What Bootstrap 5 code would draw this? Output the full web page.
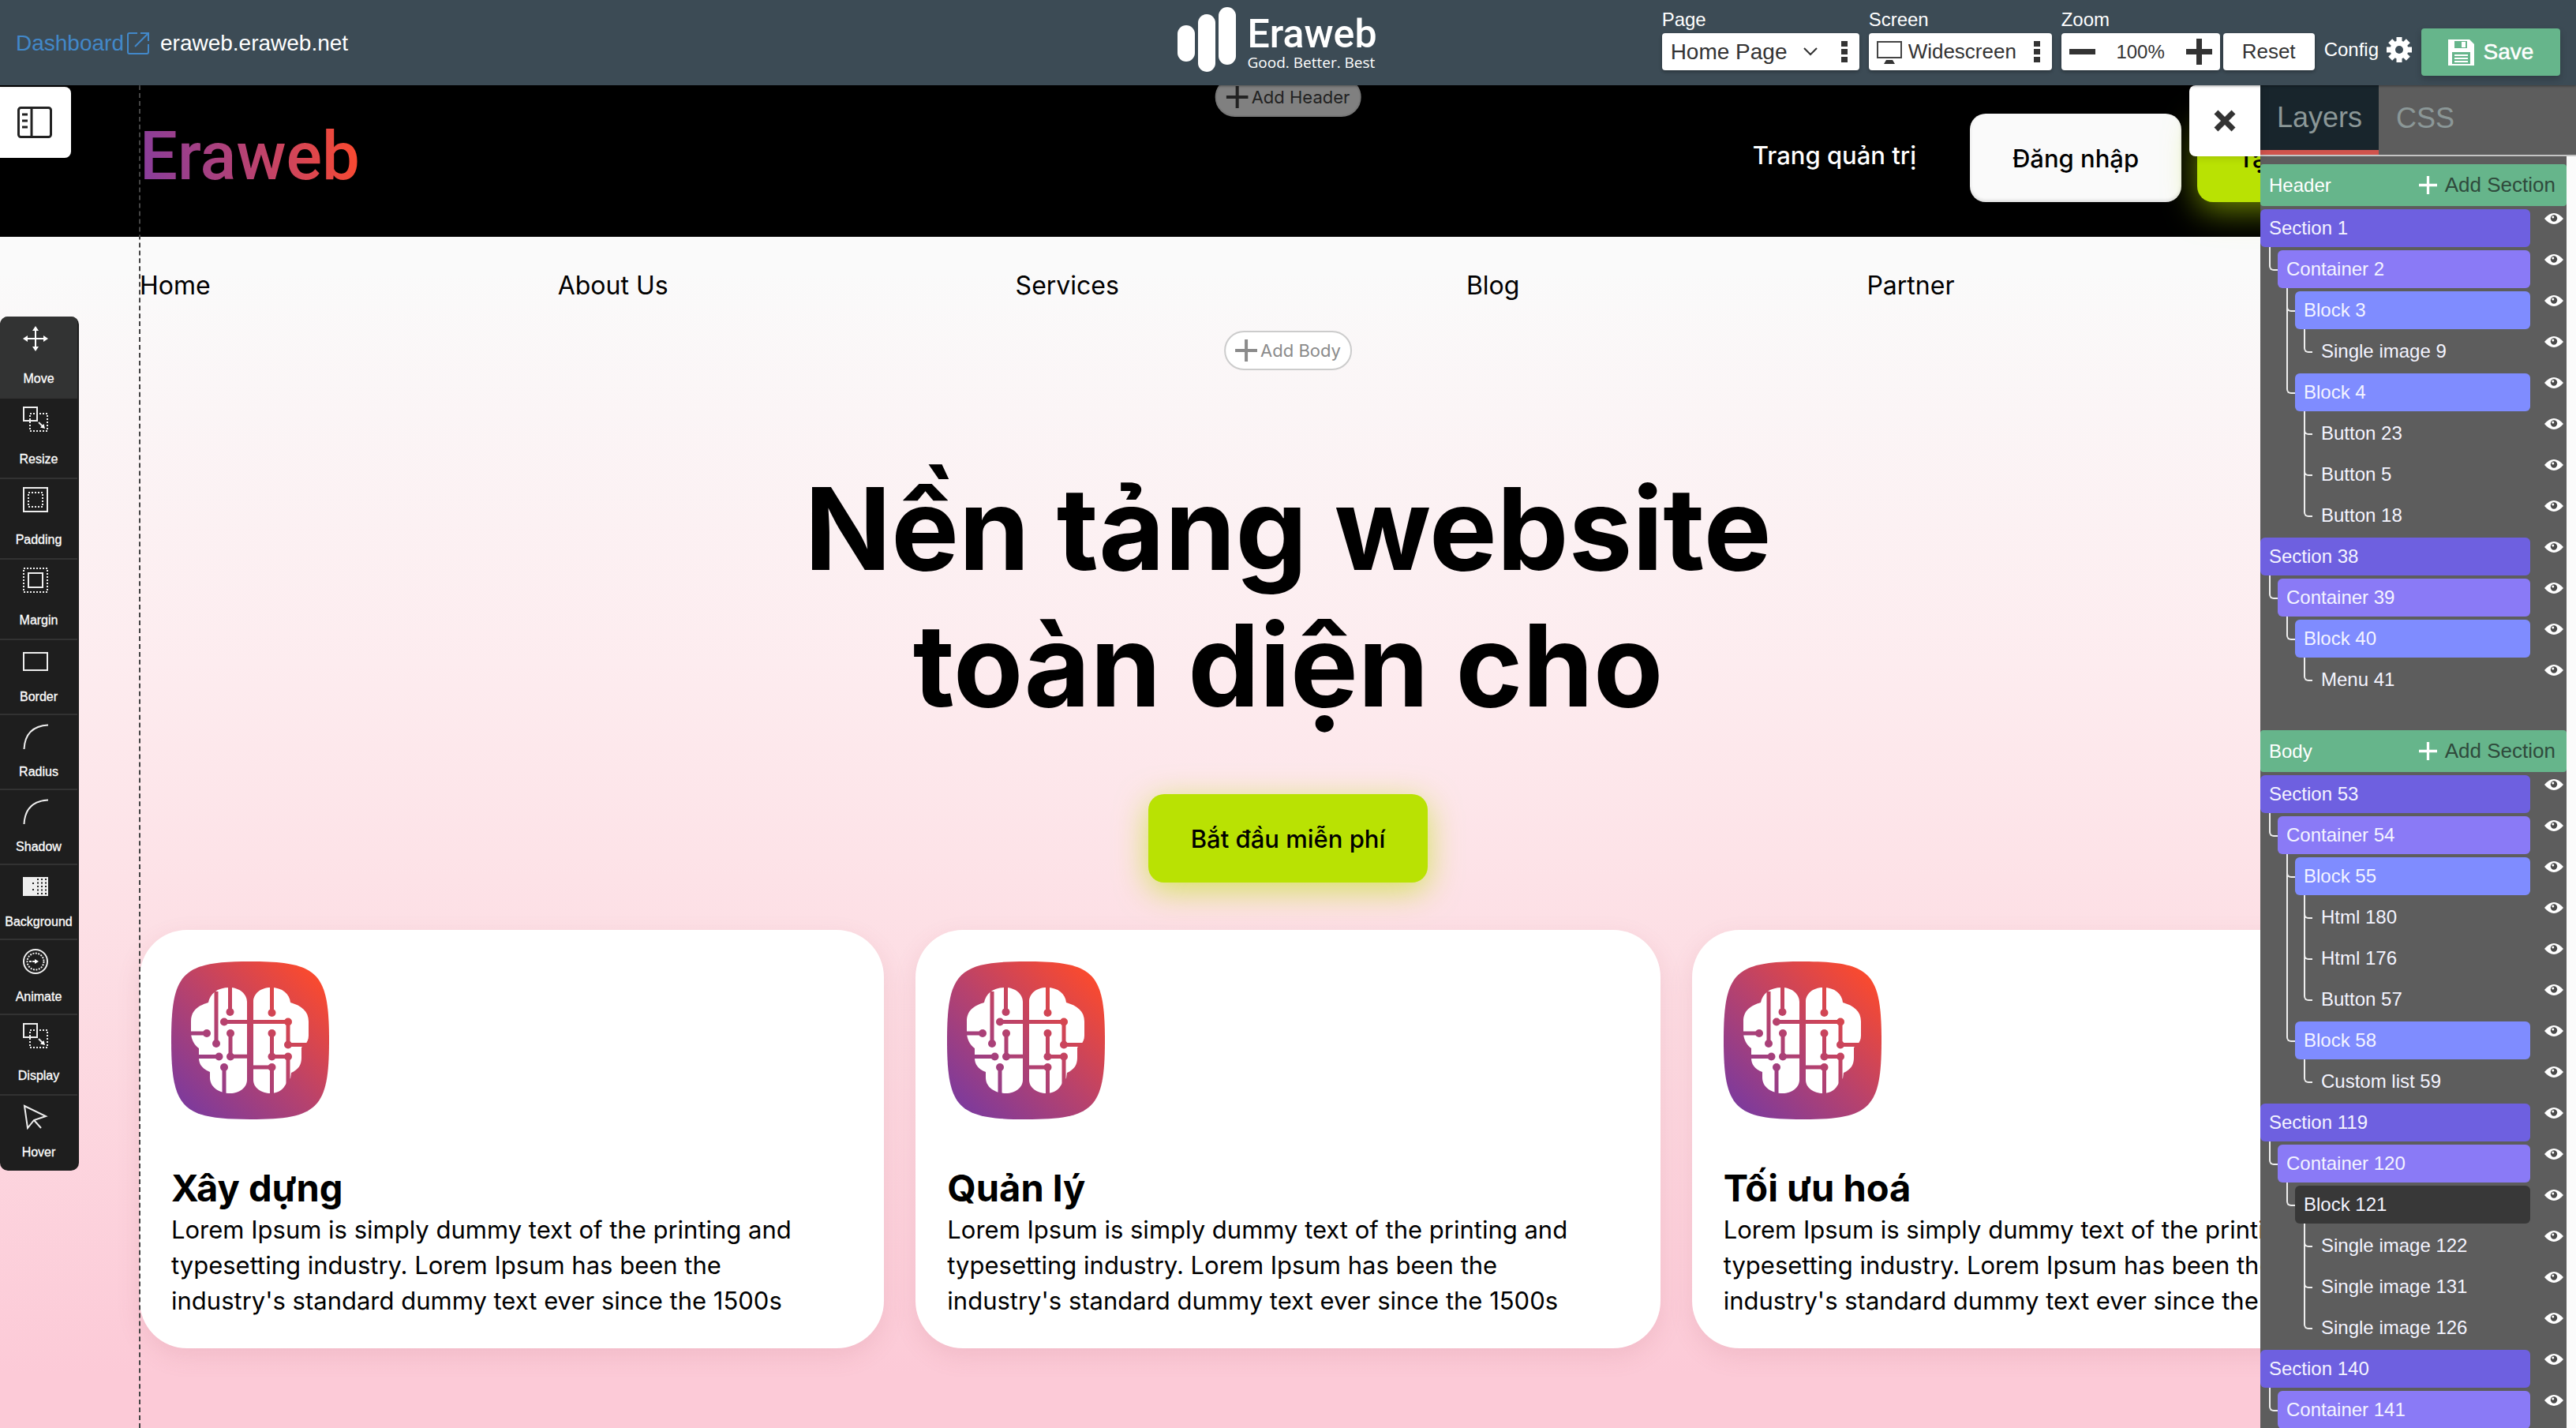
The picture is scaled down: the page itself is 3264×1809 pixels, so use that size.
<!DOCTYPE html>
<html lang="vi">
<head>
<meta charset="utf-8">
<meta name="viewport" content="width=device-width, initial-scale=1">
<title>Eraweb builder</title>
<link href="https://cdn.jsdelivr.net/npm/bootstrap@5.3.0/dist/css/bootstrap.min.css" rel="stylesheet">
<style>
  body{font-family:"Liberation Sans",Arial,sans-serif;color:#000}
  svg{display:block;flex:none}
  button{font:inherit}
  /* top bar */
  .topbar{display:grid;grid-template-columns:1fr auto 1fr;height:108px;background:#3c4b55;padding:0 20px;color:#fff;box-shadow:0 1px 3px #0006;z-index:5}
  .crumbs{font-size:28px;gap:14px;padding-top:2px}
  .crumbs a{color:#4288c9;gap:4px}
  .brand{padding:9px 28px 0 0;gap:14px}
  .brand-word{font:500 50px/52px Roboto,sans-serif}
  .brand-tag{font:400 19px/20px "Open Sans",sans-serif}
  .tools{gap:12px;padding-top:8px}
  .tool-label{font-size:24px;line-height:34px;height:34px;display:block}
  .ctl{height:47px;background:#fff;border-radius:4px;color:#333;box-shadow:0 2px 4px #0005}
  .ctl select{appearance:none;border:0;background:none;padding:0;color:#333;outline:0}
  .ctl button,.bare{border:0;background:none;padding:0;color:inherit}
  .pagebox{width:250px;padding:0 14px 0 11px;font-size:28px}
  .screenbox{width:232px;padding:0 14px 0 10px;font-size:26px}
  .zoombox{width:201px;padding:0 10px;font-size:24px}
  .resetbtn{width:116px;border:0;font-size:26px;margin:34px 0 0 4px}
  .cfg{font-size:24px;gap:10px;height:54px;margin-top:28px}
  .savebtn{width:176px;height:60px;margin-top:28px;border:0;border-radius:4px;background:#66b58b;color:#fff;font-size:28px;gap:12px;box-shadow:0 4px 8px #0003;-webkit-text-stroke:.5px #fff}
  /* site canvas: full window width, the layers panel lies over its right edge */
  .viewport{margin-right:400px;overflow:hidden}
  .canvas{width:100vw;font-family:Inter,sans-serif;font-size:32px;line-height:45px;background:linear-gradient(#fafafa 14%,#fdecef 43%,#fde2e7 59%,#fccad7 96%)}
  .wrap{max-width:2910px;margin:0 auto}
  .site-head{background:#000;height:192px}
  .site-head .wrap{gap:20px;padding-top:36px}
  .site-logo{font:500 85px/108px Roboto,sans-serif;background:linear-gradient(80deg,#863d9e,#b84272 50%,#ff4a2b);-webkit-background-clip:text;background-clip:text;color:transparent}
  .site-link{color:#fff;font-weight:500;font-size:31px;line-height:106px;margin-right:48px}
  .cta{border:0;border-radius:20px;height:112px;font-weight:500;color:#000;font-size:31px}
  .cta-plain{width:268px;background:#fafafa;box-shadow:inset 0 -2px 4px #0002}
  .cta-lime{background:#b9e203;box-shadow:0 10px 40px #b9e20399}
  .cta-wide{width:303px;padding:0 52px}
  .cta-hero{width:354px;margin-top:77px}
  .site-menu{height:144px;padding-top:39px;gap:440px}
  .site-menu a{color:#000}
  .hero{padding-top:139px}
  .hero h1{font-size:144px;line-height:173px;font-weight:700;margin:0}
  .features{gap:40px;padding-top:60px}
  .feature{flex:1 1 0;background:#fff;border-radius:60px;padding:40px 40px 38px;box-shadow:0 10px 30px #b0506022}
  .feature h2{font-size:47px;line-height:60px;font-weight:700;margin:57px 0 0}
  .feature p{margin:0;font-size:31px;max-width:820px}
  .guide{position:absolute;left:176px;top:0;bottom:0;border-left:2px dashed #444}
  .addpill{position:absolute;left:50%;transform:translateX(-50%);height:50px;border-radius:25px;border:2px solid #ccc;background:#fff;color:#8b8b8b;font:400 22px/24px Inter,sans-serif;padding:0 12px;gap:4px}
  .addpill-head{top:-10px;background:#808080;border-color:#777;color:#222}
  .addpill-body{top:311px}
  /* floating controls */
  .side-toggle{position:absolute;left:0;top:2px;width:90px;height:90px;padding-left:22px;border:0;background:#fff;border-radius:0 8px 8px 0}
  .side-close{position:absolute;right:400px;top:0;width:90px;height:90px;border:0;background:#fff;border-radius:8px 0 0 8px;z-index:1;box-shadow:0 0 12px #0003}
  .toolbox{position:absolute;left:0;top:293px;width:100px;background:#1e1e1e;border-radius:10px;overflow:hidden;color:#fff}
  .toolbox button{border:0;border-bottom:2px solid #323232;background:none;color:#fff;width:98px;font-size:16px;line-height:20px;height:95px;padding:11px 0 0;gap:19px}
  .toolbox button svg{margin-right:8px}
  .toolbox .tall{height:102px;padding-top:10px;gap:25px}
  .toolbox .tall.on{background:#323333;height:104px;padding-top:12px}
  .toolbox button:last-child{border-bottom:0}
  .toolbox span{-webkit-text-stroke:.3px #fff}
  /* layers panel */
  .layers{position:absolute;right:0;top:0;bottom:0;width:400px;background:#5d5d5d;overflow:hidden}
  .tabs{height:90px;border-bottom:2px solid #c4c4c4}
  .tabs button{border:0;background:none;color:#8b9797;font-size:36px;padding:0 22px 4px}
  .tabs .on{background:#18252c;border-bottom:6px solid #d0534c;width:150px;padding:0}
  .layers-body{padding:10px 0 0;border-right:12px solid #fbfbfb}
  .group{height:53px;background:#66b58b;border-radius:4px;color:#fff;padding:0 14px 0 11px;font-size:24px;margin-bottom:4px}
  .group button{color:#2f4a3c;font-size:26px;gap:10px}
  .tree,.tree ul{list-style:none;margin:0;padding:0}
  .tree{margin-bottom:36px}
  .tree ul{margin-left:22px}
  .tree li{position:relative}
  .tree li li::before{content:"";position:absolute;left:-11px;top:-4px;width:11px;height:30px;border:solid #eee;border-width:0 0 2px 2px;border-radius:0 0 0 6px}
  .tree li li:not(:last-child)::after{content:"";position:absolute;left:-11px;top:-4px;bottom:0;border-left:2px solid #eee}
  .node{height:52px;padding-right:4px;gap:18px}
  .node a{flex:1;height:48px;line-height:48px;padding-left:11px;border-radius:6px;font-size:24px;color:#f4f4ff;text-decoration:none}
  .node button{padding-top:5px}
  .sec{background:#6e60e0}.con{background:#8a7af6}.blk{background:#7f8cff}.sel{background:#383838}
</style>
<script src="https://cdn.jsdelivr.net/npm/bootstrap@5.3.0/dist/js/bootstrap.bundle.min.js"></script>
</head>
<body class="vh-100 d-flex flex-column overflow-hidden">
<svg width="0" height="0" class="position-absolute" aria-hidden="true">
  <defs>
    <linearGradient id="gr" gradientUnits="userSpaceOnUse" x1="20" y1="190" x2="180" y2="20"><stop stop-color="#7c3a9d"/><stop offset=".5" stop-color="#b8426c"/><stop offset="1" stop-color="#f84a30"/></linearGradient>
    <symbol id="eye" viewBox="0 0 24 14"><path d="M0 7Q6 0 12 0t12 7q-6 7-12 7T0 7Z" fill="#fff"/><circle cx="12" cy="6.500" r="4.200" fill="#4a4a4a"/><circle cx="10.800" cy="5" r="1.500" fill="#fff"/></symbol>
    <symbol id="dots" viewBox="0 0 10 30"><path d="M1 1h8v7H1zM1 11h8v7H1zM1 21h8v7H1z" fill="#333"/></symbol>
    <symbol id="plus" viewBox="0 0 28 28"><path d="M14 0v28M0 14h28" stroke="currentColor" stroke-width="4"/></symbol>
    <symbol id="resize" viewBox="0 0 32 32"><g fill="none" stroke="#eee" stroke-width="2"><path d="M1 1h17v17H1z"/><path d="M9 9h22v22H9z" stroke-dasharray="2 2"/><path d="m20 20 5 5"/></g><path d="m28 28-6-1.500 4.500-4.500z" fill="#fff"/></symbol>
    <symbol id="arc" viewBox="0 0 32 32"><path d="M1.500 32Q3 3 32 1.500" fill="none" stroke="#eee" stroke-width="2"/></symbol>
    <symbol id="brain" viewBox="0 0 200 200">
      <path d="M0 100C0 14 14 0 100 0S200 14 200 100 186 200 100 200 0 186 0 100Z" fill="url(#gr)"/>
      <g fill="#fff"><path d="M96 51v99c0 10-10 17-21 17-15 0-26-8-26-20v-7c-10-4-14-10-14-18v-12c-6-4-10-12-10-20V76c0-14 9-20 22-24 2-11 11-19 27-19 12 0 22 8 22 18Z"/>
      <path d="M104 51c0-10 9-18 22-18 15 0 24 8 25 19 14 4 23 11 23 24v18c0 5-2 8-4 11l-5 4v13c0 9-4 15-13 19l-1 7-5 3v3c-4 8-10 13-20 13-12 0-22-7-22-17Z"/></g>
      <g fill="none" stroke="url(#gr)" stroke-width="5"><path d="M74.500 32v32M57 38v66M66 76.500h82v29h28M127.500 32v33M24 91h21M75 91v29.200h22M34 120.500h27M67 134v34M127.500 91v29.500H148V158M103 134h24.500v34"/></g>
      <g fill="url(#gr)"><circle cx="74.500" cy="64" r="5"/><circle cx="57" cy="104" r="5"/><circle cx="67" cy="76.500" r="5"/><circle cx="148" cy="76.500" r="5"/><circle cx="148" cy="105.500" r="5"/><circle cx="127.500" cy="65" r="5"/><circle cx="45" cy="91" r="5"/><circle cx="75" cy="91" r="5"/><circle cx="75" cy="120.500" r="5"/><circle cx="60.500" cy="120.500" r="5"/><circle cx="67" cy="134" r="5"/><circle cx="127.500" cy="91" r="5"/><circle cx="127.500" cy="120.500" r="5"/><circle cx="148" cy="120.500" r="5"/><circle cx="127.500" cy="134" r="5"/></g>
    </symbol>
  </defs>
</svg>

<header class="topbar position-relative">
  <div class="crumbs d-flex align-items-center">
    <a href="#" class="d-flex align-items-center text-decoration-none">Dashboard
      <svg width="28" height="28" viewBox="0 0 28 28" fill="none" stroke="#4288c9" stroke-width="2"><path d="M13 1H3a2 2 0 0 0-2 2v22a2 2 0 0 0 2 2h22a2 2 0 0 0 2-2V15M17 1h10v10M27 1 10 18"/></svg></a>
    <span>eraweb.eraweb.net</span>
  </div>
  <div class="brand d-flex">
    <svg width="75" height="82" viewBox="0 0 75 82" fill="#fff"><rect y="23" width="22" height="46" rx="11"/><rect x="26" y="9" width="22" height="73" rx="11"/><rect x="52" width="22" height="73" rx="11"/></svg>
    <div class="pt-2"><div class="brand-word">Eraweb</div><div class="brand-tag">Good. Better. Best</div></div>
  </div>
  <div class="tools d-flex justify-content-end align-items-start">
    <div><label class="tool-label" for="page">Page</label>
      <div class="ctl pagebox d-flex align-items-center justify-content-between"><select id="page"><option>Home Page</option></select>
        <svg width="18" height="12" viewBox="0 0 18 12" fill="none" stroke="#333" stroke-width="2"><path d="m1 1 8 8 8-8"/></svg>
        <button class="ms-2" aria-label="Page menu"><svg width="10" height="30"><use href="#dots"/></svg></button></div></div>
    <div><label class="tool-label" for="screen">Screen</label>
      <div class="ctl screenbox d-flex align-items-center"><svg width="32" height="30" viewBox="0 0 32 30"><path d="M1 2h30v20H1z" fill="none" stroke="#444" stroke-width="2"/><path d="M12 25h8l3 5H9z" fill="#333"/></svg>
        <select id="screen" class="ms-2"><option>Widescreen</option></select>
        <button class="ms-auto" aria-label="Screen menu"><svg width="10" height="30"><use href="#dots"/></svg></button></div></div>
    <div class="d-flex">
      <div><label class="tool-label" for="zoomout">Zoom</label>
        <div class="ctl zoombox d-flex align-items-center justify-content-between"><button id="zoomout" aria-label="Zoom out"><svg width="33" height="8" viewBox="0 0 33 8"><path d="M0 0h33v7H0z" fill="#333"/></svg></button><span>100%</span><button aria-label="Zoom in"><svg width="33" height="33" viewBox="0 0 33 33"><path d="M16.500 0v33M0 16.500h33" stroke="#333" stroke-width="7"/></svg></button></div></div>
      <button class="ctl resetbtn">Reset</button>
    </div>
    <button class="bare cfg d-flex align-items-center"><span>Config</span>
      <svg width="32" height="32" viewBox="0 0 32 32"><g stroke="#fff" stroke-width="7"><path d="M16 0v32M0 16h32M4.700 4.700l22.600 22.600M27.300 4.700 4.700 27.300"/></g><circle cx="16" cy="16" r="11.500" fill="#fff"/><circle cx="16" cy="16" r="5" fill="#3c4b55"/></svg></button>
    <button class="savebtn d-flex align-items-center justify-content-center"><svg width="33" height="33" viewBox="0 0 33 33"><path d="M0 0h27l6 6v27H0z" fill="#fff"/><path d="M8 2h16v9H8zM5 16h23v15H5z" fill="#66b58b"/><path d="M17 3h5v7h-5zM8 19h17v2H8zM8 23h17v2H8zM8 27h17v2H8z" fill="#fff"/></svg>Save</button>
  </div>
</header>

<main class="position-relative flex-fill overflow-hidden">
  <div class="viewport h-100">
  <div class="canvas h-100">
    <div class="site-head"><div class="wrap d-flex">
      <div class="site-logo me-auto">Eraweb</div>
      <a href="#" class="site-link text-decoration-none">Trang quản trị</a>
      <button class="cta cta-plain">Đăng nhập</button>
      <button class="cta cta-lime cta-wide text-start">Tạo</button>
    </div></div>
    <nav class="wrap site-menu d-flex text-nowrap">
      <a href="#" class="text-decoration-none">Home</a><a href="#" class="text-decoration-none">About Us</a><a href="#" class="text-decoration-none">Services</a><a href="#" class="text-decoration-none">Blog</a><a href="#" class="text-decoration-none">Partner</a>
    </nav>
    <section class="hero text-center">
      <h1>Nền tảng website<br>toàn diện cho</h1>
      <button class="cta cta-lime cta-hero">Bắt đầu miễn phí</button>
    </section>
    <section class="wrap features d-flex">
      <article class="feature"><svg width="200" height="200"><use href="#brain"/></svg><h2>Xây dựng</h2><p>Lorem Ipsum is simply dummy text of the printing and typesetting industry. Lorem Ipsum has been the industry's standard dummy text ever since the 1500s</p></article>
      <article class="feature"><svg width="200" height="200"><use href="#brain"/></svg><h2>Quản lý</h2><p>Lorem Ipsum is simply dummy text of the printing and typesetting industry. Lorem Ipsum has been the industry's standard dummy text ever since the 1500s</p></article>
      <article class="feature"><svg width="200" height="200"><use href="#brain"/></svg><h2>Tối ưu hoá</h2><p>Lorem Ipsum is simply dummy text of the printing and typesetting industry. Lorem Ipsum has been the industry's standard dummy text ever since the 1500s</p></article>
    </section>
  </div>
  </div>
  <div class="guide"></div>
  <button class="addpill addpill-head d-flex align-items-center"><svg width="28" height="28"><use href="#plus"/></svg>Add Header</button>
  <button class="addpill addpill-body d-flex align-items-center"><svg width="28" height="28"><use href="#plus"/></svg>Add Body</button>

  <button class="side-toggle" aria-label="Toggle sidebar"><svg width="44" height="40" viewBox="0 0 44 40" fill="none" stroke="#222" stroke-width="3"><rect x="1.500" y="1.500" width="41" height="37" rx="3"/><path d="M18 1v38M6 10h7M6 18h7M6 26h7"/></svg></button>

  <div class="toolbox">
    <button class="tall on d-flex flex-column align-items-center"><svg width="32" height="32" viewBox="0 0 32 32"><path d="M16 4v24M4 16h24" stroke="#fff" stroke-width="2"/><path d="m16 0 4 6h-8zM16 32l4-6h-8zM0 16l6-4v8zM32 16l-6-4v8z" fill="#fff"/></svg><span>Move</span></button>
    <button class="tall d-flex flex-column align-items-center"><svg width="32" height="32"><use href="#resize"/></svg><span>Resize</span></button>
    <button class="tall d-flex flex-column align-items-center"><svg width="32" height="32" viewBox="0 0 32 32" fill="none" stroke="#eee" stroke-width="2"><path d="M1 1h30v30H1z"/><path d="M7 7h18v18H7z" stroke-dasharray="2 2"/></svg><span>Padding</span></button>
    <button class="tall d-flex flex-column align-items-center"><svg width="32" height="32" viewBox="0 0 32 32" fill="none" stroke="#eee" stroke-width="2"><path d="M1 1h30v30H1z" stroke-dasharray="2 2"/><path d="M7 7h18v18H7z"/></svg><span>Margin</span></button>
    <button class="d-flex flex-column align-items-center"><svg width="32" height="32" viewBox="0 0 32 32" fill="none" stroke="#eee" stroke-width="2"><path d="M1 5h30v22H1z"/></svg><span>Border</span></button>
    <button class="d-flex flex-column align-items-center"><svg width="32" height="32"><use href="#arc"/></svg><span>Radius</span></button>
    <button class="d-flex flex-column align-items-center"><svg width="32" height="32"><use href="#arc"/></svg><span>Shadow</span></button>
    <button class="d-flex flex-column align-items-center"><svg width="32" height="32" viewBox="0 0 32 32"><path d="M0 4h32v24H0z" fill="#eee"/><path d="M29 6v22M24 6v22M19 6v22" stroke="#222" stroke-width="2" stroke-dasharray="2 2.500"/><path d="M13 11v12" stroke="#222" stroke-width="2" stroke-dasharray="2 6"/></svg><span>Background</span></button>
    <button class="d-flex flex-column align-items-center"><svg width="32" height="32" viewBox="0 0 32 32" fill="none" stroke="#eee" stroke-width="2"><circle cx="16" cy="16" r="15"/><circle cx="16" cy="16" r="10.500" stroke-dasharray="2 1.500"/><path d="M8 16h10" stroke-dasharray="3 1"/><path d="m15 13 5 3-5 3z" fill="#fff" stroke="none"/></svg><span>Animate</span></button>
    <button class="tall d-flex flex-column align-items-center"><svg width="32" height="32"><use href="#resize"/></svg><span>Display</span></button>
    <button class="d-flex flex-column align-items-center"><svg width="32" height="32" viewBox="0 0 32 32" fill="none" stroke="#eee" stroke-width="2"><path d="m2 2 27 13-15 5-8 10zM14 20l9 10"/></svg><span>Hover</span></button>
  </div>

  <button class="side-close d-flex align-items-center justify-content-center" aria-label="Close panel"><svg width="28" height="28" viewBox="0 0 28 28"><path d="m3 3 22 22M25 3 3 25" stroke="#333" stroke-width="7"/></svg></button>
  <aside class="layers">
    <div class="tabs d-flex"><button class="on">Layers</button><button>CSS</button></div>
    <div class="layers-body h-100">
      <div class="group d-flex align-items-center justify-content-between">Header<button class="bare d-flex align-items-center"><svg width="23" height="23" viewBox="0 0 28 28" color="#fff"><use href="#plus"/></svg>Add Section</button></div>
      <ul class="tree">
        <li><div class="node d-flex align-items-start"><a href="#" class="sec">Section 1</a><button class="bare" aria-label="Toggle"><svg width="24" height="14"><use href="#eye"/></svg></button></div>
          <ul><li><div class="node d-flex align-items-start"><a href="#" class="con">Container 2</a><button class="bare" aria-label="Toggle"><svg width="24" height="14"><use href="#eye"/></svg></button></div>
            <ul><li><div class="node d-flex align-items-start"><a href="#" class="blk">Block 3</a><button class="bare" aria-label="Toggle"><svg width="24" height="14"><use href="#eye"/></svg></button></div>
                <ul><li><div class="node d-flex align-items-start"><a href="#">Single image 9</a><button class="bare" aria-label="Toggle"><svg width="24" height="14"><use href="#eye"/></svg></button></div></li></ul></li>
              <li><div class="node d-flex align-items-start"><a href="#" class="blk">Block 4</a><button class="bare" aria-label="Toggle"><svg width="24" height="14"><use href="#eye"/></svg></button></div>
                <ul><li><div class="node d-flex align-items-start"><a href="#">Button 23</a><button class="bare" aria-label="Toggle"><svg width="24" height="14"><use href="#eye"/></svg></button></div></li>
                  <li><div class="node d-flex align-items-start"><a href="#">Button 5</a><button class="bare" aria-label="Toggle"><svg width="24" height="14"><use href="#eye"/></svg></button></div></li>
                  <li><div class="node d-flex align-items-start"><a href="#">Button 18</a><button class="bare" aria-label="Toggle"><svg width="24" height="14"><use href="#eye"/></svg></button></div></li></ul></li></ul></li></ul></li>
        <li><div class="node d-flex align-items-start"><a href="#" class="sec">Section 38</a><button class="bare" aria-label="Toggle"><svg width="24" height="14"><use href="#eye"/></svg></button></div>
          <ul><li><div class="node d-flex align-items-start"><a href="#" class="con">Container 39</a><button class="bare" aria-label="Toggle"><svg width="24" height="14"><use href="#eye"/></svg></button></div>
            <ul><li><div class="node d-flex align-items-start"><a href="#" class="blk">Block 40</a><button class="bare" aria-label="Toggle"><svg width="24" height="14"><use href="#eye"/></svg></button></div>
                <ul><li><div class="node d-flex align-items-start"><a href="#">Menu 41</a><button class="bare" aria-label="Toggle"><svg width="24" height="14"><use href="#eye"/></svg></button></div></li></ul></li></ul></li></ul></li>
      </ul>
      <div class="group d-flex align-items-center justify-content-between">Body<button class="bare d-flex align-items-center"><svg width="23" height="23" viewBox="0 0 28 28" color="#fff"><use href="#plus"/></svg>Add Section</button></div>
      <ul class="tree">
        <li><div class="node d-flex align-items-start"><a href="#" class="sec">Section 53</a><button class="bare" aria-label="Toggle"><svg width="24" height="14"><use href="#eye"/></svg></button></div>
          <ul><li><div class="node d-flex align-items-start"><a href="#" class="con">Container 54</a><button class="bare" aria-label="Toggle"><svg width="24" height="14"><use href="#eye"/></svg></button></div>
            <ul><li><div class="node d-flex align-items-start"><a href="#" class="blk">Block 55</a><button class="bare" aria-label="Toggle"><svg width="24" height="14"><use href="#eye"/></svg></button></div>
                <ul><li><div class="node d-flex align-items-start"><a href="#">Html 180</a><button class="bare" aria-label="Toggle"><svg width="24" height="14"><use href="#eye"/></svg></button></div></li>
                  <li><div class="node d-flex align-items-start"><a href="#">Html 176</a><button class="bare" aria-label="Toggle"><svg width="24" height="14"><use href="#eye"/></svg></button></div></li>
                  <li><div class="node d-flex align-items-start"><a href="#">Button 57</a><button class="bare" aria-label="Toggle"><svg width="24" height="14"><use href="#eye"/></svg></button></div></li></ul></li>
              <li><div class="node d-flex align-items-start"><a href="#" class="blk">Block 58</a><button class="bare" aria-label="Toggle"><svg width="24" height="14"><use href="#eye"/></svg></button></div>
                <ul><li><div class="node d-flex align-items-start"><a href="#">Custom list 59</a><button class="bare" aria-label="Toggle"><svg width="24" height="14"><use href="#eye"/></svg></button></div></li></ul></li></ul></li></ul></li>
        <li><div class="node d-flex align-items-start"><a href="#" class="sec">Section 119</a><button class="bare" aria-label="Toggle"><svg width="24" height="14"><use href="#eye"/></svg></button></div>
          <ul><li><div class="node d-flex align-items-start"><a href="#" class="con">Container 120</a><button class="bare" aria-label="Toggle"><svg width="24" height="14"><use href="#eye"/></svg></button></div>
            <ul><li><div class="node d-flex align-items-start"><a href="#" class="sel">Block 121</a><button class="bare" aria-label="Toggle"><svg width="24" height="14"><use href="#eye"/></svg></button></div>
                <ul><li><div class="node d-flex align-items-start"><a href="#">Single image 122</a><button class="bare" aria-label="Toggle"><svg width="24" height="14"><use href="#eye"/></svg></button></div></li>
                  <li><div class="node d-flex align-items-start"><a href="#">Single image 131</a><button class="bare" aria-label="Toggle"><svg width="24" height="14"><use href="#eye"/></svg></button></div></li>
                  <li><div class="node d-flex align-items-start"><a href="#">Single image 126</a><button class="bare" aria-label="Toggle"><svg width="24" height="14"><use href="#eye"/></svg></button></div></li></ul></li></ul></li></ul></li>
        <li><div class="node d-flex align-items-start"><a href="#" class="sec">Section 140</a><button class="bare" aria-label="Toggle"><svg width="24" height="14"><use href="#eye"/></svg></button></div>
          <ul><li><div class="node d-flex align-items-start"><a href="#" class="con">Container 141</a><button class="bare" aria-label="Toggle"><svg width="24" height="14"><use href="#eye"/></svg></button></div></li></ul></li>
      </ul>
    </div>
  </aside>
</main>
</body>
</html>
